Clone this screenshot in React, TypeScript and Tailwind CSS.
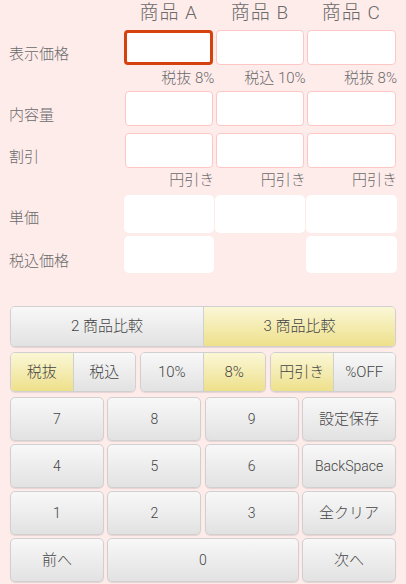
import React from "react";

const font = { fontFamily: "Roboto, 'Noto Sans CJK JP', sans-serif" };

const gray = "bg-gradient-to-b from-[#f8f8f8] to-[#e2e2e2]";
const yellow = "bg-gradient-to-b from-[#fbf7d6] to-[#eee08a]";

function InputBox({ focused }: { focused?: boolean }) {
  return focused ? (
    <div className="mx-[1px] h-[35px] rounded-[4px] border-[3px] border-[#d6420e] bg-white" />
  ) : (
    <div className="mx-[1.5px] h-[35px] rounded-[4px] border-[1.5px] border-[#ffc6c6] bg-white" />
  );
}

function Label({ text, top }: { text: string; top: string }) {
  return (
    <div className={`pl-[9px] text-[15px] leading-none text-[#6a6a6a] ${top}`}>{text}</div>
  );
}

function Sub({ text }: { text: string }) {
  return <div className="whitespace-pre text-right text-[15px] leading-none text-[#6a6a6a]">{text}</div>;
}

function Key({ children, cls = "" }: { children: React.ReactNode; cls?: string }) {
  return (
    <div
      className={`flex h-[44px] items-center justify-center rounded-[5px] border border-[#d0d0d0] ${gray} text-[14px] text-[#444] shadow-[0_1px_1px_rgba(0,0,0,0.1)] ${cls}`}
    >
      {children}
    </div>
  );
}

function Toggle({ a, b, activeA }: { a: string; b: string; activeA: boolean }) {
  return (
    <div className="flex h-[40px] overflow-hidden rounded-[5px] border border-[#d0d0d0] shadow-[0_1px_1px_rgba(0,0,0,0.1)]">
      <div className={`flex flex-1 items-center justify-center border-r border-[#d0d0d0] ${activeA ? yellow : gray}`}>{a}</div>
      <div className={`flex flex-1 items-center justify-center ${activeA ? gray : yellow}`}>{b}</div>
    </div>
  );
}

export default function App() {
  return (
    <div className="h-[584px] w-[406px] overflow-hidden bg-[#feeceb] font-light" style={font}>
      <div className="grid grid-cols-[123px_1fr_1fr_1fr] pr-[9px]">
        <div className="h-[30px]" />
        {["商品 A", "商品 B", "商品 C"].map((t) => (
          <div key={t} className="flex h-[30px] items-start justify-center whitespace-pre pt-[3px] text-[19px] leading-[20px] tracking-[1px] text-[#6a6a6a]">
            {t}
          </div>
        ))}

        <Label text="表示価格" top="pt-[17px]" />
        <InputBox focused />
        <InputBox />
        <InputBox />
        <div className="h-[26px]" />
        <div className="pt-[6px]"><Sub text="税抜 8%" /></div>
        <div className="pt-[6px]"><Sub text="税込 10%" /></div>
        <div className="pt-[6px]"><Sub text="税抜 8%" /></div>

        <Label text="内容量" top="pt-[17px]" />
        <InputBox />
        <InputBox />
        <InputBox />
        <div className="col-span-4 h-[7px]" />

        <Label text="割引" top="pt-[17px]" />
        <InputBox />
        <InputBox />
        <InputBox />
        <div className="h-[27px]" />
        <div className="pt-[5px]"><Sub text="円引き" /></div>
        <div className="pt-[5px]"><Sub text="円引き" /></div>
        <div className="pt-[5px]"><Sub text="円引き" /></div>

        <Label text="単価" top="pt-[16px]" />
        <div className="mx-[0.5px] h-[38px] rounded-[5px] bg-white" />
        <div className="mx-[0.5px] h-[38px] rounded-[5px] bg-white" />
        <div className="mx-[0.5px] h-[38px] rounded-[5px] bg-white" />
        <div className="col-span-4 h-[3px]" />

        <Label text="税込価格" top="pt-[18px]" />
        <div className="mx-[0.5px] h-[37px] rounded-[5px] bg-white" />
        <div />
        <div className="mx-[0.5px] h-[37px] rounded-[5px] bg-white" />
      </div>

      <div className="mt-[33px] flex flex-col gap-[5px] px-[10px] text-[#444]">
        <div className="flex h-[41px] overflow-hidden rounded-[5px] border border-[#d0d0d0] text-[15px] shadow-[0_1px_1px_rgba(0,0,0,0.1)]">
          <div className={`flex w-[193px] items-center justify-center border-r border-[#d0d0d0] ${gray}`}>2 商品比較</div>
          <div className={`flex flex-1 items-center justify-center ${yellow}`}>3 商品比較</div>
        </div>
        <div className="grid grid-cols-3 gap-[4px] text-[15px]">
          <Toggle a="税抜" b="税込" activeA />
          <Toggle a="10%" b="8%" activeA={false} />
          <Toggle a="円引き" b="%OFF" activeA />
        </div>
      </div>

      <div className="mt-[5px] grid grid-cols-4 gap-x-[3.5px] gap-y-[3px] px-[10px]">
        <Key>7</Key>
        <Key>8</Key>
        <Key>9</Key>
        <Key cls="text-[15px]">設定保存</Key>
        <Key>4</Key>
        <Key>5</Key>
        <Key>6</Key>
        <Key>BackSpace</Key>
        <Key>1</Key>
        <Key>2</Key>
        <Key>3</Key>
        <Key cls="text-[15px]">全クリア</Key>
        <Key cls="text-[15px]">前へ</Key>
        <Key cls="col-span-2">0</Key>
        <Key cls="text-[15px]">次へ</Key>
      </div>
    </div>
  );
}
